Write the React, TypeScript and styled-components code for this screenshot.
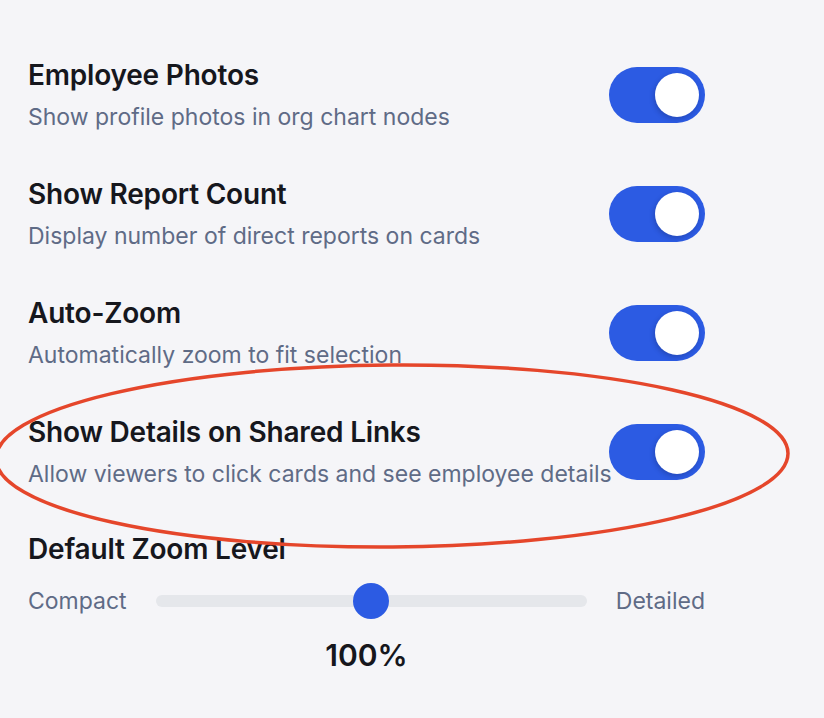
import React, { FC, useState } from "react";
import styled, { createGlobalStyle } from "styled-components";

const GlobalStyle = createGlobalStyle`
  html, body {
    margin: 0;
    padding: 0;
    background: #f5f5f8;
    overflow: hidden;
  }
  * {
    box-sizing: border-box;
  }
`;

type ToggleSetting = {
  id: string;
  title: string;
  description: string;
};

const settings: ToggleSetting[] = [
  {
    id: "photos",
    title: "Employee Photos",
    description: "Show profile photos in org chart nodes",
  },
  {
    id: "reports",
    title: "Show Report Count",
    description: "Display number of direct reports on cards",
  },
  {
    id: "zoom",
    title: "Auto-Zoom",
    description: "Automatically zoom to fit selection",
  },
  {
    id: "shared",
    title: "Show Details on Shared Links",
    description: "Allow viewers to click cards and see employee details",
  },
];

const Toggle: FC<{ on: boolean; onChange: () => void }> = ({ on, onChange }) => (
  <Track $on={on} onClick={onChange} role="switch" aria-checked={on}>
    <Knob $on={on} />
  </Track>
);

const App: FC = () => {
  const [values, setValues] = useState<Record<string, boolean>>({
    photos: true,
    reports: true,
    zoom: true,
    shared: true,
  });
  const [zoom] = useState(100);

  return (
    <Page>
      <GlobalStyle />
      <List>
        {settings.map((s) => (
          <Row key={s.id}>
            <Text>
              <Title>{s.title}</Title>
              <Description>{s.description}</Description>
            </Text>
            <Toggle
              on={values[s.id]}
              onChange={() => setValues((v) => ({ ...v, [s.id]: !v[s.id] }))}
            />
          </Row>
        ))}
      </List>

      <ZoomSection>
        <Title>Default Zoom Level</Title>
        <SliderRow>
          <SliderLabel>Compact</SliderLabel>
          <SliderTrack>
            <SliderThumb style={{ left: `${((zoom - 50) / 100) * 100}%` }} />
          </SliderTrack>
          <SliderLabel>Detailed</SliderLabel>
        </SliderRow>
        <ZoomValue>{zoom}%</ZoomValue>
      </ZoomSection>

      <Annotation viewBox="0 0 824 718" aria-hidden="true">
        <ellipse
          cx="392"
          cy="456"
          rx="396"
          ry="91"
          fill="none"
          stroke="#e5462b"
          strokeWidth="3.5"
          transform="rotate(-0.4 392 456)"
        />
      </Annotation>
    </Page>
  );
};

export default App;

const Page = styled.div`
  position: relative;
  width: 824px;
  height: 718px;
  padding: 58px 119px 0 28px;
  font-family: Inter, "Noto Sans", sans-serif;
  color: #16171d;
`;

const List = styled.div`
  display: flex;
  flex-direction: column;
  gap: 45px;
`;

const Row = styled.div`
  display: flex;
  align-items: center;
  justify-content: space-between;
  height: 74px;
`;

const Text = styled.div`
  display: flex;
  flex-direction: column;
  gap: 10px;
  min-width: 0;
`;

const Title = styled.div`
  font-size: 28px;
  line-height: 34px;
  font-weight: 600;
  letter-spacing: -0.2px;
  white-space: nowrap;
`;

const Description = styled.div`
  font-size: 23px;
  line-height: 30px;
  color: #5f6b86;
  white-space: nowrap;
`;

const Track = styled.div<{ $on: boolean }>`
  flex: 0 0 96px;
  width: 96px;
  height: 56px;
  border-radius: 28px;
  background: ${(p) => (p.$on ? "#2c5be3" : "#d4d7de")};
  display: flex;
  align-items: center;
  justify-content: ${(p) => (p.$on ? "flex-end" : "flex-start")};
  padding: 0 6px;
  cursor: pointer;
`;

const Knob = styled.div<{ $on: boolean }>`
  width: 44px;
  height: 44px;
  border-radius: 50%;
  background: #ffffff;
  box-shadow: -1px 2px 5px rgba(10, 20, 60, 0.25);
`;

const ZoomSection = styled.div`
  margin-top: 43px;
  display: flex;
  flex-direction: column;
`;

const SliderRow = styled.div`
  margin-top: 17px;
  height: 36px;
  display: flex;
  align-items: center;
  gap: 29px;
`;

const SliderLabel = styled.span`
  font-size: 23px;
  line-height: 30px;
  color: #5f6b86;
`;

const SliderTrack = styled.div`
  position: relative;
  flex: 1;
  height: 12px;
  border-radius: 6px;
  background: #e5e7eb;
`;

const SliderThumb = styled.div`
  position: absolute;
  top: 50%;
  width: 36px;
  height: 36px;
  border-radius: 50%;
  background: #2c5be3;
  transform: translate(-50%, -50%);
`;

const ZoomValue = styled.div`
  margin-top: 18px;
  text-align: center;
  font-size: 30px;
  line-height: 36px;
  font-weight: 600;
`;

const Annotation = styled.svg`
  position: absolute;
  inset: 0;
  width: 824px;
  height: 718px;
  pointer-events: none;
`;
